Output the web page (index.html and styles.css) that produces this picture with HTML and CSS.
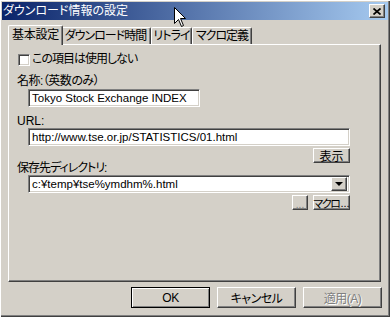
FILE: index.html
```html
<!DOCTYPE html>
<html lang="ja">
<head>
    <meta charset="UTF-8">
    <title>ダウンロード情報の設定</title>
    <link rel="stylesheet" href="styles.css">
</head>
<body>

<div class="window">
    <div class="titlebar">
        <span class="title">ダウンロード情報の設定</span>
        <div class="close-button">
            <svg width="8" height="7" viewBox="0 0 8 7"><path d="M0.5 0.5 L7.5 6.5 M7.5 0.5 L0.5 6.5" stroke="#000" stroke-width="1.7"/></svg>
        </div>
    </div>

    <div class="tabs">
        <div class="tab active" style="width:55px">基本設定</div>
        <div class="tab" style="width:90px">ダウンロード時間</div>
        <div class="tab" style="width:41px">リトライ</div>
        <div class="tab" style="width:60px">マクロ定義</div>
    </div>

    <div class="panel">
        <div class="check-row">
            <span class="checkbox"></span>
            <span>この項目は使用しない</span>
        </div>

        <div class="label name-label">名称:（英数のみ）</div>
        <div class="field name-field">Tokyo Stock Exchange INDEX</div>

        <div class="label url-label">URL:</div>
        <div class="field url-field">http://www.tse.or.jp/STATISTICS/01.html</div>
        <div class="button-row">
            <div class="button small wide">表示</div>
        </div>

        <div class="label dir-label">保存先ディレクトリ:</div>
        <div class="field combo">
            <span>c:¥temp¥tse%ymdhm%.html</span>
            <div class="drop-button"><span class="arrow"></span></div>
        </div>
        <div class="button-row">
            <div class="button small dots">...</div>
            <div class="button small wide macro"><span class="kana">マクロ</span>...</div>
        </div>
    </div>

    <div class="actions">
        <div class="button big default">OK</div>
        <div class="button big">キャンセル</div>
        <div class="button big disabled">適用(A)</div>
    </div>

    <svg class="cursor" width="13" height="20" viewBox="0 0 13 20">
        <path d="M0.5 0.5 L0.5 16.5 L4.5 12.5 L7.5 19.5 L9.5 18.5 L6.5 11.5 L11.5 11.5 Z" fill="#fff" stroke="#000" stroke-width="1"/>
    </svg>
</div>

</body>
</html>
```

FILE: styles.css
```css
body {
    margin: 0;
    background-color: #d4d0c8;
    font-family: "Liberation Sans", "Noto Sans CJK JP", sans-serif;
    font-size: 12px;
    color: #000;
    font-feature-settings: "palt";
}
.window {
    position: relative;
    width: 390px;
    height: 317px;
    box-sizing: border-box;
    padding: 2px;
    background-color: #d4d0c8;
    box-shadow: inset 1px 1px #fff, inset -1px -1px #404040, inset -2px -2px #808080;
}
.titlebar {
    display: flex;
    align-items: center;
    justify-content: space-between;
    height: 18px;
    padding: 0 3px 0 1px;
    background: linear-gradient(to right, #0a246a, #a6caf0);
}
.title {
    color: #fff;
    font-size: 12px;
    line-height: 18px;
}
.close-button {
    display: flex;
    align-items: center;
    justify-content: center;
    width: 16px;
    height: 14px;
    box-sizing: border-box;
    background-color: #d4d0c8;
    border: 1px solid;
    border-color: #fff #404040 #404040 #fff;
    box-shadow: inset -1px -1px #808080;
}
.tabs {
    display: flex;
    align-items: flex-end;
    height: 19px;
    margin-top: 5px;
    padding-left: 8px;
}
.tab {
    position: relative;
    height: 17px;
    box-sizing: border-box;
    border-top: 1px solid #fff;
    border-left: 1px solid #fff;
    border-right: 1px solid #404040;
    border-radius: 2px 2px 0 0;
    box-shadow: inset -1px 0 #808080;
    text-align: center;
    line-height: 17px;
    letter-spacing: -1px;
    white-space: nowrap;
}
.tab.active {
    z-index: 2;
    height: 20px;
    margin: 0 -2px -1px -2px;
    background-color: #d4d0c8;
    line-height: 19px;
    letter-spacing: -0.3px;
}
.tab.active + .tab {
    border-left: none;
}
.panel {
    width: 373px;
    height: 238px;
    margin-left: 6px;
    box-sizing: border-box;
    padding: 8px 0 0 8px;
    border: 1px solid;
    border-color: #fff #404040 #404040 #fff;
    box-shadow: inset -1px -1px #808080;
}
.check-row {
    display: flex;
    align-items: center;
    height: 13px;
    line-height: 13px;
    letter-spacing: -1px;
}
.checkbox {
    width: 12px;
    height: 12px;
    box-sizing: border-box;
    margin: 0 2px 0 1px;
    background-color: #fff;
    border: 1px solid;
    border-color: #808080 #fff #fff #808080;
    box-shadow: inset 1px 1px #404040, inset -1px -1px #d4d0c8;
}
.label {
    line-height: 14px;
    height: 14px;
}
.name-label {
    margin-top: 8px;
    letter-spacing: -0.5px;
}
.url-label {
    margin-top: 7px;
}
.dir-label {
    margin-top: -1px;
    line-height: 13px;
    height: 13px;
    letter-spacing: -1px;
}
.field {
    display: flex;
    align-items: center;
    height: 18px;
    box-sizing: border-box;
    margin-left: 11px;
    padding-left: 3px;
    background-color: #fff;
    border: 1px solid;
    border-color: #808080 #fff #fff #808080;
    box-shadow: inset 1px 1px #404040, inset -1px -1px #d4d0c8;
    font-size: 11.5px;
    white-space: nowrap;
}
.name-field {
    width: 172px;
    margin-top: 1px;
}
.url-field {
    width: 322px;
}
.combo {
    width: 322px;
    justify-content: space-between;
    padding-right: 2px;
}
.drop-button {
    display: flex;
    align-items: center;
    justify-content: center;
    width: 16px;
    height: 14px;
    box-sizing: border-box;
    background-color: #d4d0c8;
    border: 1px solid;
    border-color: #fff #404040 #404040 #fff;
    box-shadow: inset -1px -1px #808080;
}
.arrow {
    width: 0;
    height: 0;
    border-left: 4px solid transparent;
    border-right: 4px solid transparent;
    border-top: 4px solid #000;
}
.button-row {
    display: flex;
    justify-content: flex-end;
    gap: 5px;
    width: 333px;
    margin-top: 2px;
}
.button {
    display: flex;
    align-items: center;
    justify-content: center;
    box-sizing: border-box;
    background-color: #d4d0c8;
    border: 1px solid;
    border-color: #fff #404040 #404040 #fff;
    box-shadow: inset -1px -1px #808080;
    white-space: nowrap;
}
.button.small {
    height: 15px;
    font-size: 12px;
}
.button.wide {
    width: 37px;
}
.button.macro {
    font-size: 11px;
}
.kana {
    letter-spacing: -1.5px;
    margin-right: 1px;
}
.button.dots {
    width: 16px;
    font-size: 10px;
    color: #808080;
    padding-top: 3px;
}
.actions {
    display: flex;
    justify-content: flex-end;
    gap: 7px;
    margin-top: 5px;
    padding-right: 6px;
}
.button.big {
    width: 79px;
    height: 21px;
    letter-spacing: -0.5px;
}
.button.default {
    border-color: #000;
    box-shadow: inset 1px 1px #fff, inset -1px -1px #808080;
}
.button.disabled {
    color: #808080;
    text-shadow: 1px 1px 0 #fff;
}
.cursor {
    position: absolute;
    left: 174px;
    top: 7px;
}
```
